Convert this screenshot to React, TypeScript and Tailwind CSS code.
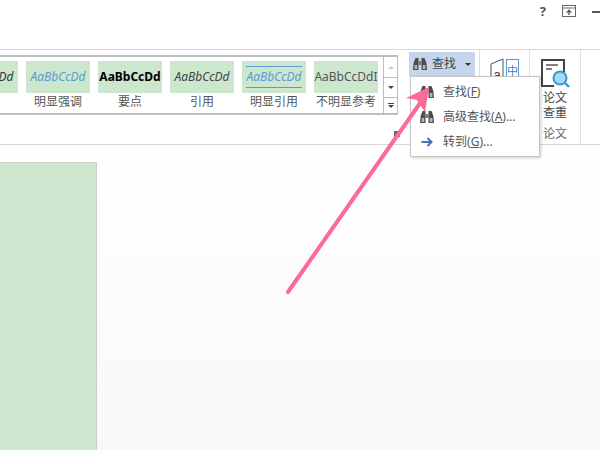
const cjk = "font-['Noto_Sans','Noto_Sans_CJK_SC',sans-serif]";

const styles = [
  { label: "", sample: "AaBbCcDd", cls: "italic text-[#333]", ruled: false },
  { label: "明显强调", sample: "AaBbCcDd", cls: "italic text-[#5b9bd5]", ruled: false },
  { label: "要点", sample: "AaBbCcDd", cls: "font-bold text-black", ruled: false },
  { label: "引用", sample: "AaBbCcDd", cls: "italic text-[#444]", ruled: false },
  { label: "明显引用", sample: "AaBbCcDd", cls: "italic text-[#5b9bd5]", ruled: true },
  { label: "不明显参考", sample: "AaBbCcDdI", cls: "text-[#555] text-[11.5px]", ruled: false },
];

function Binoculars({ className }: { className: string }) {
  return (
    <svg viewBox="0 0 16 16" className={className}>
      <path d="M1 14 L1.6 7 L3.5 2 H6.5 V14 Z M15 14 L14.4 7 L12.5 2 H9.5 V14 Z" fill="#4d4d4d" />
      <rect x="6.5" y="5" width="3" height="4" fill="#7a7a7a" />
      <rect x="2.6" y="9" width="2.6" height="4" fill="#b5b5b5" />
      <rect x="10.8" y="9" width="2.6" height="4" fill="#b5b5b5" />
    </svg>
  );
}

function MenuItem({ icon, text, keyChar, tail }: { icon: React.ReactNode; text: string; keyChar: string; tail: string }) {
  return (
    <div className="flex h-[25px] items-center text-[12px] text-[#555]">
      <div className="flex w-[32px] justify-center">{icon}</div>
      <span>
        {text}(<span className="underline">{keyChar}</span>){tail}
      </span>
    </div>
  );
}

export default function App() {
  return (
    <div className={`relative flex h-[450px] w-[600px] flex-col overflow-hidden bg-white ${cjk}`}>
      <div className="flex h-[49px] shrink-0 items-start justify-end gap-[16px] pt-[5px]">
        <span className="text-[13px] font-bold leading-[13px] text-[#555]">?</span>
        <svg viewBox="0 0 14 12" className="h-[12px] w-[14px]">
          <rect x="0.5" y="0.5" width="13" height="11" fill="none" stroke="#666" />
          <path d="M0.5 3 H13.5" stroke="#666" />
          <path d="M7 10 V5.5 M4.8 7.6 L7 5.2 L9.2 7.6" fill="none" stroke="#555" strokeWidth="1.3" />
        </svg>
        <div className="mt-[6px] h-[2px] w-[8px] bg-[#555]" />
      </div>

      <div className="flex h-[96px] shrink-0 border-y border-[#d8d8d8]">
        <div className="relative w-[405px] shrink-0">
          <div className="mt-[5px] flex h-[60px] w-[398px] border-y-2 border-r border-[#bdbdbd]">
            <div className="flex min-w-0 flex-1 justify-end gap-[8px] overflow-hidden pr-[5px] pt-[4px]">
              {styles.map((s, i) => (
                <div key={i} className="flex w-[64px] shrink-0 flex-col items-center">
                  <div className="flex h-[32px] w-full items-center justify-center overflow-hidden bg-[#cde6ce]">
                    <span className={`whitespace-nowrap text-[12px] ${s.cls} ${s.ruled ? "border-y border-[#5b9bd5] py-[1px]" : ""}`}>
                      {s.sample}
                    </span>
                  </div>
                  <span className="mt-[1px] whitespace-nowrap text-[12px] leading-[16px] text-[#555]">{s.label}</span>
                </div>
              ))}
            </div>
            <div className="flex w-[14px] shrink-0 flex-col border-l border-[#bdbdbd] text-[#666]">
              <div className="flex h-[21px] items-center justify-center border-b border-[#bdbdbd]">
                <div className="h-0 w-0 border-x-[3px] border-b-[3px] border-x-transparent border-b-[#c8c8c8]" />
              </div>
              <div className="flex h-[20px] items-center justify-center border-b border-[#bdbdbd]">
                <div className="h-0 w-0 border-x-[3px] border-t-[3px] border-x-transparent border-t-[#444]" />
              </div>
              <div className="flex flex-1 flex-col items-center justify-center gap-[1px]">
                <div className="h-[1px] w-[6px] bg-[#444]" />
                <div className="h-0 w-0 border-x-[3px] border-t-[3px] border-x-transparent border-t-[#444]" />
              </div>
            </div>
          </div>
          <div className="absolute left-[394px] top-[81px] h-[6px] w-[6px] bg-[#666]" />
        </div>

        <div className="flex w-[75px] shrink-0 border-r border-[#e0e0e0] pt-[2px]">
          <div className="ml-[4px] flex h-[24px] w-[66px] items-center bg-[#c5d5ee] pl-[3px] text-[12px] text-[#444]">
            <Binoculars className="h-[16px] w-[16px]" />
            <span className="ml-[4px]">查找</span>
            <div className="ml-[9px] h-0 w-0 border-x-[3px] border-t-[3px] border-x-transparent border-t-[#333]" />
          </div>
        </div>

        <div className="flex w-[50px] shrink-0 justify-center border-r border-[#e0e0e0] pt-[8px]">
          <svg viewBox="0 0 30 26" className="h-[26px] w-[30px]">
            <path d="M1 6 L13 1 V25 H1 Z" fill="white" stroke="#555" />
            <text x="3.5" y="21" fontSize="13" fill="#444" fontFamily="Liberation Sans">a</text>
            <rect x="16.5" y="1.5" width="12" height="20" fill="white" stroke="#5b9bd5" />
            <text x="17" y="17" fontSize="11" fill="#3a7fc4" fontFamily="Noto Sans CJK SC">中</text>
          </svg>
        </div>

        <div className="flex w-[51px] shrink-0 flex-col items-center border-r border-[#e0e0e0] pt-[8px] text-[12px] leading-[15px] text-[#444]">
          <svg viewBox="0 0 30 30" className="h-[30px] w-[30px]">
            <path d="M24 14 V2 H2 V28 H14" fill="none" stroke="#444" strokeWidth="2" />
            <path d="M6 7 H18 M6 11 H12" stroke="#555" strokeWidth="1.6" />
            <circle cx="20" cy="20" r="6.5" fill="#a9d8f2" stroke="#2e9bd6" strokeWidth="2" />
            <path d="M25 25 L29 29" stroke="#2e9bd6" strokeWidth="2.4" />
          </svg>
          <span className="mt-[2px]">论文</span>
          <span>查重</span>
          <span className="mt-[6px] text-[#666]">论文</span>
        </div>
      </div>

      <div className="min-h-0 flex-1 bg-gradient-to-b from-white to-[#f8f8f8] pt-[17px]">
        <div className="h-[300px] w-[97px] border-r border-t border-[#cfcfc9] bg-[#cde6ce]" />
      </div>

      <div className="absolute left-[410px] top-[76px] w-[130px] border border-[#c6c6c6] bg-white py-[2px] shadow-[1px_1px_3px_rgba(0,0,0,0.2)]">
        <MenuItem icon={<Binoculars className="h-[16px] w-[16px]" />} text="查找" keyChar="F" tail="" />
        <MenuItem icon={<Binoculars className="h-[16px] w-[16px]" />} text="高级查找" keyChar="A" tail="..." />
        <MenuItem
          icon={
            <svg viewBox="0 0 12 10" className="h-[10px] w-[12px]">
              <path d="M0.5 5 H10 M6.5 1 L10.5 5 L6.5 9" fill="none" stroke="#3f75b5" strokeWidth="2" />
            </svg>
          }
          text="转到"
          keyChar="G"
          tail="..."
        />
      </div>

      <svg viewBox="0 0 600 450" className="pointer-events-none absolute left-0 top-0 h-[450px] w-[600px]">
        <path d="M288 292 L425 96" stroke="#fd6a94" strokeWidth="4" strokeLinecap="round" fill="none" />
        <path d="M429 87 L406 98 L417 100 L425 112 Z" fill="#fd6a94" />
      </svg>
    </div>
  );
}
